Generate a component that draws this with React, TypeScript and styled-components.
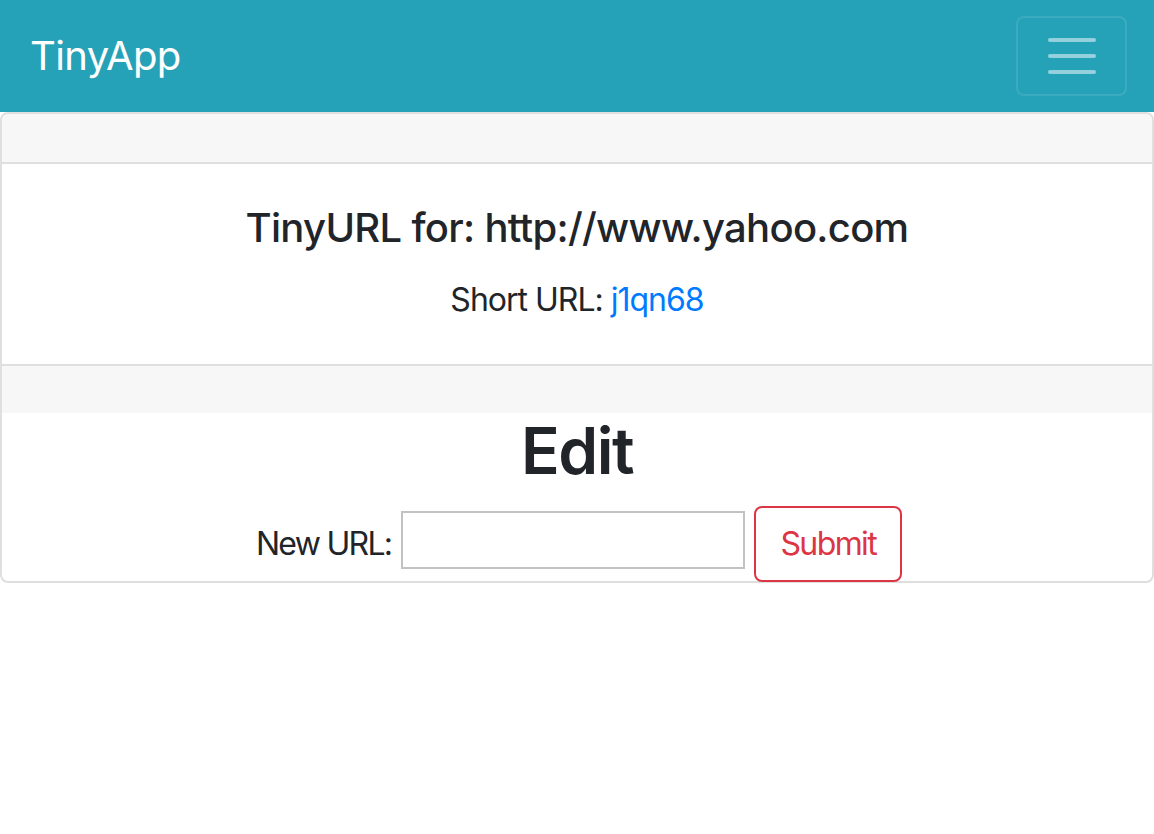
import React from "react";
import styled, { createGlobalStyle } from "styled-components";

const GlobalStyle = createGlobalStyle`
  * {
    box-sizing: border-box;
  }
  body {
    margin: 0;
    background: #ffffff;
    color: #212529;
    font-family: Inter, "Noto Sans", "Liberation Sans", sans-serif;
    font-size: 32px;
    line-height: 1.5;
    letter-spacing: -1px;
  }
`;

const Navbar = styled.nav`
  display: flex;
  align-items: center;
  justify-content: space-between;
  height: 112px;
  padding: 16px 27px 16px 30px;
  background: #25a2b8;
`;

const Brand = styled.a`
  color: #ffffff;
  font-size: 40px;
  line-height: 1.5;
  letter-spacing: -0.6px;
  text-decoration: none;
`;

const Toggler = styled.button`
  display: flex;
  flex-direction: column;
  align-items: center;
  justify-content: center;
  gap: 12px;
  width: 111px;
  height: 80px;
  padding: 0;
  background: transparent;
  border: 2px solid rgba(255, 255, 255, 0.1);
  border-radius: 8px;
`;

const TogglerLine = styled.span`
  display: block;
  width: 48px;
  height: 4px;
  border-radius: 2px;
  background: rgba(255, 255, 255, 0.5);
`;

const Card = styled.div`
  border: 2px solid #dfdfdf;
  border-radius: 8px;
`;

const CardBand = styled.div<{ $top?: boolean }>`
  height: ${(p) => (p.$top ? "50px" : "47px")};
  background: #f7f7f7;
  border-radius: ${(p) => (p.$top ? "6px 6px 0 0" : "0")};
  border-bottom: ${(p) => (p.$top ? "2px solid #dfdfdf" : "none")};
`;

const CardBody = styled.div`
  padding: 40px;
  text-align: center;
  border-bottom: 2px solid #dfdfdf;
`;

const CardTitle = styled.h5`
  margin: 0 0 24px;
  font-size: 40px;
  font-weight: 500;
  line-height: 1.2;
  letter-spacing: -0.7px;
`;

const CardText = styled.p`
  margin: 0;
`;

const Link = styled.a`
  color: #007bff;
  text-decoration: none;
`;

const EditSection = styled.div`
  display: flex;
  flex-direction: column;
  align-items: center;
  height: 168px;
`;

const EditTitle = styled.h2`
  margin: 0 0 16px;
  font-size: 64px;
  font-weight: 600;
  line-height: 1.2;
  letter-spacing: -1.5px;
`;

const Form = styled.form`
  display: flex;
  align-items: center;
  gap: 10px;
  margin-left: 4px;
`;

const Label = styled.label`
  font-size: 32px;
  letter-spacing: -1.7px;
`;

const Input = styled.input`
  width: 344px;
  height: 58px;
  margin: 0 -1px 8px 0;
  border: 2px solid #c2c2c2;
  border-radius: 0;
  padding: 0 8px;
  font-family: inherit;
  font-size: 26px;
`;

const SubmitButton = styled.button`
  height: 76px;
  padding: 0 24px;
  font-family: inherit;
  font-size: 32px;
  line-height: 1.5;
  letter-spacing: -1.6px;
  color: #dc3545;
  background: #ffffff;
  border: 2px solid #dc3545;
  border-radius: 8px;
`;

export default function App() {
  return (
    <>
      <GlobalStyle />
      <Navbar>
        <Brand href="#">TinyApp</Brand>
        <Toggler type="button" aria-label="Toggle navigation">
          <TogglerLine />
          <TogglerLine />
          <TogglerLine />
        </Toggler>
      </Navbar>
      <Card>
        <CardBand $top />
        <CardBody>
          <CardTitle>TinyURL for: http://www.yahoo.com</CardTitle>
          <CardText>
            Short URL: <Link href="#">j1qn68</Link>
          </CardText>
        </CardBody>
        <CardBand />
        <EditSection>
          <EditTitle>Edit</EditTitle>
          <Form onSubmit={(e) => e.preventDefault()}>
            <Label htmlFor="longURL">New URL:</Label>
            <Input id="longURL" type="text" name="longURL" />
            <SubmitButton type="submit">Submit</SubmitButton>
          </Form>
        </EditSection>
      </Card>
    </>
  );
}
